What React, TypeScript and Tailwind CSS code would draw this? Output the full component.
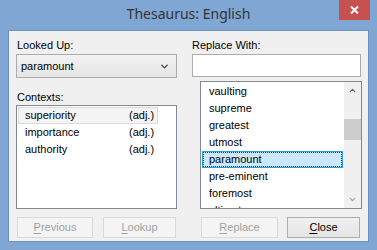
import { ChevronDown, ChevronUp } from 'lucide-react';

/* ─── List data ─── */
const CONTEXTS = [
    { word: 'superiority', pos: '(adj.)' },
    { word: 'importance', pos: '(adj.)' },
    { word: 'authority', pos: '(adj.)' },
];

const SYNONYMS = ['vaulting', 'supreme', 'greatest', 'utmost', 'paramount', 'pre-eminent', 'foremost', 'ultimate'];

const font = { fontFamily: '"Liberation Sans", Arial, sans-serif' };

const DlgButton = ({ label, width, enabled = false }: { label: string; width: string; enabled?: boolean }) => (
    <div
        className={`h-[21px] ${width} flex items-center justify-center text-[11px] border
            ${enabled
                ? 'border-[#adadad] bg-gradient-to-b from-[#f0f0f0] to-[#e5e5e5] text-black'
                : 'border-[#d9d9d9] bg-[#f4f4f4] text-[#a0a0a0]'
            }`}
    >
        <span>
            <span className="underline underline-offset-2">{label[0]}</span>
            {label.slice(1)}
        </span>
    </div>
);

const App = () => {
    return (
        <div className="w-[377px] h-[250px] bg-[#80a6d4] flex flex-col relative overflow-hidden" style={font}>
            {/* Title bar */}
            <div className="h-[30px] flex items-center justify-center">
                <span className="text-[14px] text-[#333] pb-[3px]" style={{ fontFamily: '"Noto Sans", sans-serif' }}>
                    Thesaurus: English
                </span>
            </div>
            <div className="absolute top-0 left-[339px] w-[31px] h-[20px] bg-[#c75050] flex items-center justify-center">
                <svg width="9" height="8" viewBox="0 0 9 8">
                    <path d="M1 0.5 L8 7.5 M8 0.5 L1 7.5" stroke="white" strokeWidth="2" />
                </svg>
            </div>

            {/* Client area */}
            <div className="mx-[8px] h-[212px] bg-[#f0f0f0] border border-[#6f91bd] text-[11px] text-black">
                <div className="flex pl-[7px] pt-[8px]">
                    {/* Left column */}
                    <div className="w-[161px] flex flex-col">
                        <div className="h-[13px] leading-[13px] pl-[1px]">Looked Up:</div>
                        <div className="mt-[2px] h-[24px] border border-[#acacac] bg-gradient-to-b from-[#f2f2f2] to-[#e5e5e5] flex items-center justify-between pl-[4px] pr-[6px]">
                            <span>paramount</span>
                            <ChevronDown size={11} strokeWidth={3} className="text-[#444]" />
                        </div>
                        <div className="mt-[13px] h-[13px] leading-[13px] pl-[1px]">Contexts:</div>
                        <div className="mt-[1px] h-[104px] border border-[#828790] bg-white pt-[1px] pl-[1px]">
                            {CONTEXTS.map((c, i) => (
                                <div
                                    key={c.word}
                                    className={`h-[17px] w-[140px] flex items-center pl-[6px] border
                                        ${i === 0 ? 'bg-[#f4f4f4] border-[#dadada]' : 'border-transparent'}`}
                                >
                                    <span className="w-[104px]">{c.word}</span>
                                    <span>{c.pos}</span>
                                </div>
                            ))}
                        </div>
                        <div className="mt-[8px] flex gap-[10px] pl-[1px]">
                            <DlgButton label="Previous" width="w-[76px]" />
                            <DlgButton label="Lookup" width="w-[73px]" />
                        </div>
                    </div>

                    {/* Right column */}
                    <div className="ml-[15px] w-[169px] flex flex-col">
                        <div className="h-[13px] leading-[13px]">Replace With:</div>
                        <div className="mt-[2px] h-[23px] border border-[#acacac] bg-white" />
                        <div className="mt-[4px] ml-[8px] w-[162px] h-[128px] border border-[#828790] bg-white flex">
                            <div className="flex-1 pt-[1px] pl-[1px] overflow-hidden">
                                {SYNONYMS.map((s) => (
                                    <div
                                        key={s}
                                        className={`h-[17px] w-[141px] flex items-center pl-[6px] border
                                            ${s === 'paramount'
                                                ? 'bg-[#cce8ff] border-[#26a0da] outline-1 outline-dotted outline-[#333] -outline-offset-2'
                                                : 'border-transparent'
                                            }`}
                                    >
                                        {s}
                                    </div>
                                ))}
                            </div>
                            <div className="w-[17px] bg-[#f0f0f0] flex flex-col items-center">
                                <div className="h-[17px] flex items-center justify-center">
                                    <ChevronUp size={9} strokeWidth={3} className="text-[#606060]" />
                                </div>
                                <div className="mt-[20px] w-[17px] h-[21px] bg-[#cdcdcd]" />
                                <div className="flex-1" />
                                <div className="h-[17px] flex items-center justify-center">
                                    <ChevronDown size={9} strokeWidth={3} className="text-[#a0a0a0]" />
                                </div>
                            </div>
                        </div>
                        <div className="mt-[8px] flex gap-[9px] ml-[9px]">
                            <DlgButton label="Replace" width="w-[77px]" />
                            <DlgButton label="Close" width="w-[73px]" enabled />
                        </div>
                    </div>
                </div>
            </div>
        </div>
    );
};

export default App;
